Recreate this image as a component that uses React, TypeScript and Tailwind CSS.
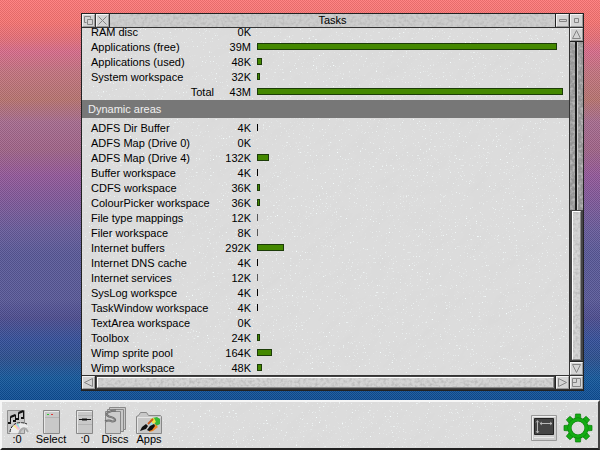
import type { ReactNode } from 'react'

type Area = { name: string; size: string; bar: number }

const memory: Area[] = [
    { name: 'RAM disc', size: '0K', bar: 0 },
    { name: 'Applications (free)', size: '39M', bar: 300 },
    { name: 'Applications (used)', size: '48K', bar: 5 },
    { name: 'System workspace', size: '32K', bar: 3 },
    { name: 'Total', size: '43M', bar: 306 },
]

const dynamicAreas: Area[] = [
    { name: 'ADFS Dir Buffer', size: '4K', bar: 1 },
    { name: 'ADFS Map (Drive 0)', size: '0K', bar: 0 },
    { name: 'ADFS Map (Drive 4)', size: '132K', bar: 12 },
    { name: 'Buffer workspace', size: '4K', bar: 1 },
    { name: 'CDFS workspace', size: '36K', bar: 3 },
    { name: 'ColourPicker workspace', size: '36K', bar: 3 },
    { name: 'File type mappings', size: '12K', bar: 1 },
    { name: 'Filer workspace', size: '8K', bar: 1 },
    { name: 'Internet buffers', size: '292K', bar: 27 },
    { name: 'Internet DNS cache', size: '4K', bar: 1 },
    { name: 'Internet services', size: '12K', bar: 1 },
    { name: 'SysLog workspce', size: '4K', bar: 1 },
    { name: 'TaskWindow workspace', size: '4K', bar: 1 },
    { name: 'TextArea workspace', size: '0K', bar: 0 },
    { name: 'Toolbox', size: '24K', bar: 3 },
    { name: 'Wimp sprite pool', size: '164K', bar: 15 },
    { name: 'Wimp workspace', size: '48K', bar: 5 },
]

const gearTeeth = [0, 45, 90, 135, 180, 225, 270, 315]

// Stone texture that sits behind the content of a relative parent
function Marble({ id }: { id: string }) {
    return (
        <svg className="pointer-events-none absolute inset-0 h-full w-full" aria-hidden="true">
            <filter id={`${id}-vein`} x="0" y="0" width="100%" height="100%">
                <feTurbulence type="fractalNoise" baseFrequency="0.03 0.09" numOctaves="5" seed="8" />
                <feColorMatrix values="0 0 0 0 0.7  0 0 0 0 0.7  0 0 0 0 0.7  2.4 0 0 0 -1.1" />
            </filter>
            <filter id={`${id}-fleck`} x="0" y="0" width="100%" height="100%">
                <feTurbulence type="fractalNoise" baseFrequency="0.7" numOctaves="2" seed="3" />
                <feColorMatrix values="0 0 0 0 0.93  0 0 0 0 1  0 0 0 0 1  0 5 0 0 -3.4" />
            </filter>
            <rect x="-400" y="-100" width="1200" height="900" transform="rotate(-38)" filter={`url(#${id}-vein)`} />
            <rect width="100%" height="100%" filter={`url(#${id}-fleck)`} />
        </svg>
    )
}

function Granite({ id }: { id: string }) {
    return (
        <svg className="pointer-events-none absolute inset-0 h-full w-full" aria-hidden="true">
            <filter id={id} x="0" y="0" width="100%" height="100%">
                <feTurbulence type="fractalNoise" baseFrequency="0.35" numOctaves="2" seed="8" />
                <feColorMatrix values="0 0 0 0 0.5  0 0 0 0 0.5  0 0 0 0 0.5  2.4 0 0 0 -0.95" />
            </filter>
            <rect width="100%" height="100%" filter={`url(#${id})`} />
        </svg>
    )
}

function Tool({ label, children }: { label: string; children: ReactNode }) {
    return (
        <button
            aria-label={label}
            className="flex h-[13px] w-[13px] shrink-0 items-center justify-center border border-t-[#f4f4f4] border-l-[#f4f4f4] border-r-[#999] border-b-[#999] bg-[#d4d4d4]"
        >
            <svg viewBox="0 0 11 11" className="h-[11px] w-[11px]" fill="none" stroke="#858585">
                {children}
            </svg>
        </button>
    )
}

function Row({ area }: { area: Area }) {
    return (
        <tr className="h-[15px]">
            <td className={`w-[132px] py-0 pl-[9px] whitespace-nowrap ${area.name === 'Total' ? 'text-right' : ''}`}>{area.name}</td>
            <td className="w-[37px] p-0 text-right">{area.size}</td>
            <td className="pt-[3px] pb-0 pl-[6px] align-top">
                {area.bar === 1 && <div className={`h-[7px] w-px ${area.size === '4K' ? 'bg-black' : 'bg-[#555]'}`} />}
                {area.bar > 1 && <div className="h-[7px] border border-[#1c3c08] bg-[#448800]" style={{ width: area.bar }} />}
            </td>
        </tr>
    )
}

function BarIcon({ label, className, children }: { label: string; className: string; children: ReactNode }) {
    return (
        <button className={`flex flex-col items-center ${className}`}>
            <svg viewBox="0 0 28 28" className="h-[28px] w-[28px] shrink-0" fill="none" aria-hidden="true">
                {children}
            </svg>
            <span className="leading-[10px]">{label}</span>
        </button>
    )
}

export default function App() {
    return (
        <div className="flex h-screen flex-col bg-[repeating-conic-gradient(#ffffff18_0_25%,#00000018_0_50%),linear-gradient(to_bottom,#ff7878_0px,#f87472_22px,#e87078_38px,#d86c8c_52px,#c47480_72px,#b87470_100px,#a86c90_122px,#a06488_150px,#94589a_175px,#80589a_200px,#685c9c_230px,#585898_255px,#585898_300px,#4c4c90_318px,#34509a_340px,#2c5090_358px,#14589c_378px,#0c4c94_400px)] bg-size-[2px_2px,auto] font-['Liberation_Sans',sans-serif] text-[11px] leading-[15px] text-black">
            <main className="flex min-h-0 flex-1 flex-col pt-[13px] pr-4 pb-[9px] pl-[81px]">
                <section className="flex min-h-0 flex-1 flex-col border border-[#222] bg-[#dcdcdc]">
                    <header className="relative flex h-[14px] shrink-0 border-b border-[#333] bg-[#cdcdcd]">
                        <Granite id="title" />
                        <div className="relative flex w-full">
                            <div className="flex gap-px bg-[#333] pr-px">
                                <Tool label="Send to back">
                                    <path d="M3.500 7.500h-2v-6h6v2M4.500 4.500h5v5h-5z" />
                                </Tool>
                                <Tool label="Close">
                                    <path d="M1.500 1.500l8 8M9.500 1.500l-8 8" />
                                </Tool>
                            </div>
                            <h1 className="flex-1 text-center leading-[13px]">Tasks</h1>
                            <div className="flex gap-px bg-[#222] pl-px">
                                <Tool label="Iconise">
                                    <path d="M2.500 4.500h7v2h-7z" />
                                </Tool>
                                <Tool label="Toggle size">
                                    <path d="M3.500 3.500h4v4h-4z" />
                                </Tool>
                            </div>
                        </div>
                    </header>

                    <div className="flex min-h-0 flex-1">
                        <div className="relative flex-1 overflow-hidden">
                            <Marble id="sheet" />
                            <table className="relative -mt-[3px] w-full table-fixed border-collapse">
                                <tbody>
                                    {memory.map((area) => <Row key={area.name} area={area} />)}
                                </tbody>
                                <tbody>
                                    <tr className="h-[18px] bg-[#777] text-left text-[#f0f0f0]">
                                        <th colSpan={3} className="py-0 pl-[6px] font-normal">Dynamic areas</th>
                                    </tr>
                                    <tr className="h-[3px]"><td colSpan={3} className="p-0" /></tr>
                                    {dynamicAreas.map((area) => <Row key={area.name} area={area} />)}
                                </tbody>
                            </table>
                        </div>
                        <div className="flex w-[14px] shrink-0 flex-col border-l border-[#333] bg-[#444]">
                            <Tool label="Scroll up">
                                <path d="M5.500 1.500l4 8h-8z" />
                            </Tool>
                            <div className="flex min-h-0 flex-1 flex-col border-y border-[#222]">
                                <div className="relative flex flex-1 justify-center bg-[#949494]">
                                    <Granite id="trough" />
                                    <div className="relative w-[3px] border-r border-[#ccc] bg-[#1c1c1c]" />
                                </div>
                                <div className="border-x-2 border-y border-[#444]">
                                    <div className="relative h-[149px] border border-t-white border-l-white border-r-[#888] border-b-[#888] bg-[#d4d4d4]">
                                        <Granite id="vslider" />
                                    </div>
                                </div>
                            </div>
                            <Tool label="Scroll down">
                                <path d="M5.500 9.500l4-8h-8z" />
                            </Tool>
                        </div>
                    </div>

                    <footer className="flex h-[15px] shrink-0 gap-px border-y border-[#333] bg-[#222]">
                        <Tool label="Scroll left">
                            <path d="M1.500 5.500l8-4v8z" />
                        </Tool>
                        <div className="flex flex-1 bg-[#444] p-px">
                            <div className="relative flex-1 border border-t-white border-l-white border-r-[#888] border-b-[#888] bg-[#d4d4d4]">
                                <Granite id="hslider" />
                            </div>
                        </div>
                        <Tool label="Scroll right">
                            <path d="M9.500 5.500l-8-4v8z" />
                        </Tool>
                        <Tool label="Adjust size">
                            <path d="M1.500 1.500h8v8h-8zM5.500 1.500v4h-4" />
                        </Tool>
                    </footer>
                </section>
            </main>

            <nav className="relative flex h-[50px] shrink-0 justify-between border-2 border-t-[#f6f6f6] border-l-[#f6f6f6] border-r-[#444] border-b-[#222] bg-[#dcdcdc]">
                <Marble id="iconbar" />
                <div className="relative flex items-start pt-[4px]">
                    <BarIcon label=":0" className="w-[30px]">
                        <path d="M4.500 4.500h17v23h-17z" fill="#c8c8c8" stroke="#909090" />
                        <path d="M7 27.500a10.500 10.500 0 0 1 18-7.500l-5 4a4 4 0 0 0-5 3.500z" fill="#ececec" />
                        <path d="M11 19l4-2 2 6-2 1z" fill="#f4b8d8" />
                        <path d="M13 18l2-1 2 6z" fill="#8ce8e0" />
                        <path d="M10 20l2-1 3 5z" fill="#f8f080" />
                        <path d="M7 26a10.500 10.500 0 0 1 7-9q6-1 10 1" stroke="#222" strokeDasharray="3 1" />
                        <path d="M17 27a4 4 0 0 1 6-4l2 3" stroke="#aaa" strokeWidth="2" />
                        <path d="M7.500 17v-6l5-2v6M15.500 13v-6l5-2v7" stroke="#111" />
                        <path d="M7.500 11l5-2M15.500 7l5-2" stroke="#111" strokeWidth="2" />
                        <path d="M5 16h3v2h-3zM10 14h3v2h-3zM13 12h3v2h-3zM18 11h3v2h-3z" fill="#111" />
                    </BarIcon>
                    <BarIcon label="Select" className="w-[38px]">
                        <path d="M6.500 4.500h16v23h-16z" fill="#c8c8c8" stroke="#888" />
                        <path d="M7.500 27v-21.500h14.500" stroke="#e8e8e8" />
                        <path d="M8 11.500h14" stroke="#b4b4b4" />
                        <path d="M10 8h2v1h-2z" fill="#30c830" />
                        <path d="M14 8h2v1h-2z" fill="#e03838" />
                    </BarIcon>
                    <BarIcon label=":0" className="w-[30px]">
                        <path d="M5.500 4.500h16v23h-16z" fill="#c8c8c8" stroke="#888" />
                        <path d="M6.500 27v-21.500h14.500" stroke="#e8e8e8" />
                        <path d="M7 9.500h14M7 18.500h14" stroke="#b4b4b4" />
                        <path d="M8 13.500h12" stroke="#111" />
                        <path d="M11 13.500h5" stroke="#111" strokeWidth="2" />
                    </BarIcon>
                    <BarIcon label="Discs" className="w-[30px]">
                        <path d="M8.500 1.500h16v22h-16z" fill="#c8c8c8" stroke="#888" />
                        <path d="M6.500 3.500h16v22h-16z" fill="#c8c8c8" stroke="#888" />
                        <path d="M4.500 5.500h15v22h-15z" fill="#ccc" stroke="#888" />
                        <path d="M4 15.500q4-2 7 0q4 0 3-2q-1-2-6-3q-4-2-1-4q3-2 8-2" stroke="#666" strokeWidth="2" />
                        <path d="M4 15.500q4-2 7 0q4 0 3-2q-1-2-6-3q-4-2-1-4q3-2 8-2" stroke="#a8a8a8" strokeWidth="0.600" />
                    </BarIcon>
                    <BarIcon label="Apps" className="w-[38px]">
                        <path d="M1.500 27.500v-17l2-1 2-3h6l2 3h12l1 1v17z" fill="#c8c8c8" stroke="#888" />
                        <path d="M2.500 27v-15.500h23" stroke="#e6e6e6" />
                        <path d="M13 17l6-5 3 3-6 6z" fill="#9ad8e8" />
                        <path d="M17 12l5-1 3 2v5l-4 2z" fill="#38b838" />
                        <path d="M14 22l6-4 3 3-5 4-4 1z" fill="#f08828" />
                        <path d="M15 13l4-1 2 4-3 2z" fill="#f4e048" />
                        <path d="M13 18l5-5" stroke="#c85820" strokeWidth="2" />
                        <path d="M5 25l2-4 4-3 2 2-2 3zM12 24l3-4 4-2 1 2-3 4-3 1z" fill="#111" />
                    </BarIcon>
                </div>
                <div className="relative flex items-center gap-[6px] pt-[6px] pr-[5px]">
                    <button aria-label="Display">
                        <svg viewBox="0 0 26 26" className="h-[26px] w-[26px]" fill="none">
                            <path d="M0.500 0.500h25v25h-25z" fill="#ccc" stroke="#999" />
                            <path d="M1.500 25v-23.500h23" stroke="#f0f0f0" />
                            <path d="M3.500 3.500h19v16h-19z" fill="#444" stroke="#222" />
                            <path d="M6.500 6v12M9 8.500h12" stroke="#b8b8b8" />
                            <path d="M5 7.500l1.500-2 1.500 2M5 16l1.500 2 1.500-2M11 7l-2 1.500 2 1.500M19 7l2 1.500-2 1.500" stroke="#b8b8b8" strokeWidth="0.800" />
                            <path d="M3 22.500h20" stroke="#e8e8e8" />
                        </svg>
                    </button>
                    <button aria-label="Task Manager">
                        <svg viewBox="-15 -15 30 30" className="h-[30px] w-[30px]" fill="none">
                            {gearTeeth.map((angle) => (
                                <path key={angle} d="M-3-8l0.500-6h5l0.500 6z" fill="#14ac14" stroke="#0a7a0a" strokeWidth="0.700" transform={`rotate(${angle})`} />
                            ))}
                            <circle r="8.500" stroke="#0a7a0a" strokeWidth="4" />
                            <circle r="8.500" stroke="#14ac14" strokeWidth="3.200" />
                        </svg>
                    </button>
                </div>
            </nav>
        </div>
    )
}
